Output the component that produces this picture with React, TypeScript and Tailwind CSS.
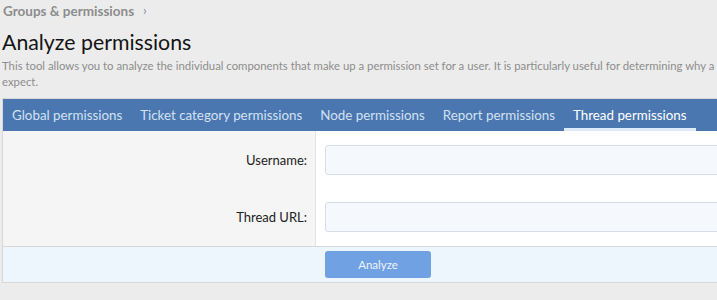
const tabs = [
    "Global permissions",
    "Ticket category permissions",
    "Node permissions",
    "Report permissions",
    "Thread permissions",
];

function Field({ label, top }: { label: string; top: string }) {
    return (
        <div className="flex">
            <div className={`w-[313px] shrink-0 bg-[#f5f5f5] border-r border-[#e2e2e2] flex items-center justify-end pr-[8px] ${top} text-[13px] text-[#222]`}>
                {label}
            </div>
            <div className={`flex-1 pl-[9px] ${top} flex items-center`}>
                <input
                    type="text"
                    className="w-full h-[30px] rounded-[3px] border border-[#d6dde6] bg-[#f5f9fd] outline-none"
                />
            </div>
        </div>
    );
}

export default function App() {
    return (
        <div
            className="w-[717px] h-[300px] overflow-hidden bg-[#ececec] text-[#141414]"
            style={{ fontFamily: '"Segoe UI", Lato, "Open Sans", sans-serif' }}
        >
            <div className="pt-[1px] px-[3px] flex items-center gap-[9px] text-[13.5px] font-bold text-[#8c8c8c]">
                <span>Groups &amp; permissions</span>
                <span className="text-[13px] font-normal">›</span>
            </div>
            <h1 className="pl-[2px] mt-[8px] text-[21.3px] leading-[26px] text-[#141414]">Analyze permissions</h1>
            <p className="pl-[2px] mt-[3px] w-[900px] text-[11.35px] leading-[16px] text-[#8c8c8c]">
                This tool allows you to analyze the individual components that make up a permission set for a user. It is particularly useful for determining why a user has permissions you may not
                <br />
                expect.
            </p>
            <div className="ml-[2px] mt-[8px] w-[740px] border border-[#d8d8d8]">
                <div className="flex bg-[#4a77b0] h-[32px] text-[13.35px] text-[#d3e1f3]">
                    {tabs.map((t, i) => (
                        <div
                            key={t}
                            className={
                                i === tabs.length - 1
                                    ? "px-[9px] flex items-center border-b-[3px] border-[#dfeaf8] pt-[3px] text-white"
                                    : "px-[9px] flex items-center"
                            }
                        >
                            {t}
                        </div>
                    ))}
                </div>
                <div className="bg-white">
                    <Field label="Username:" top="pt-[14px] pb-[13px]" />
                    <Field label="Thread URL:" top="pt-[14px] pb-[14px]" />
                </div>
                <div className="bg-[#edf5fd] border-t border-[#d8d8d8] h-[36px] flex items-center pl-[322px]">
                    <button className="w-[106px] h-[27px] rounded-[3px] bg-[#6fa1e3] text-[11.5px] text-[#eef4fc]">
                        Analyze
                    </button>
                </div>
            </div>
        </div>
    );
}
